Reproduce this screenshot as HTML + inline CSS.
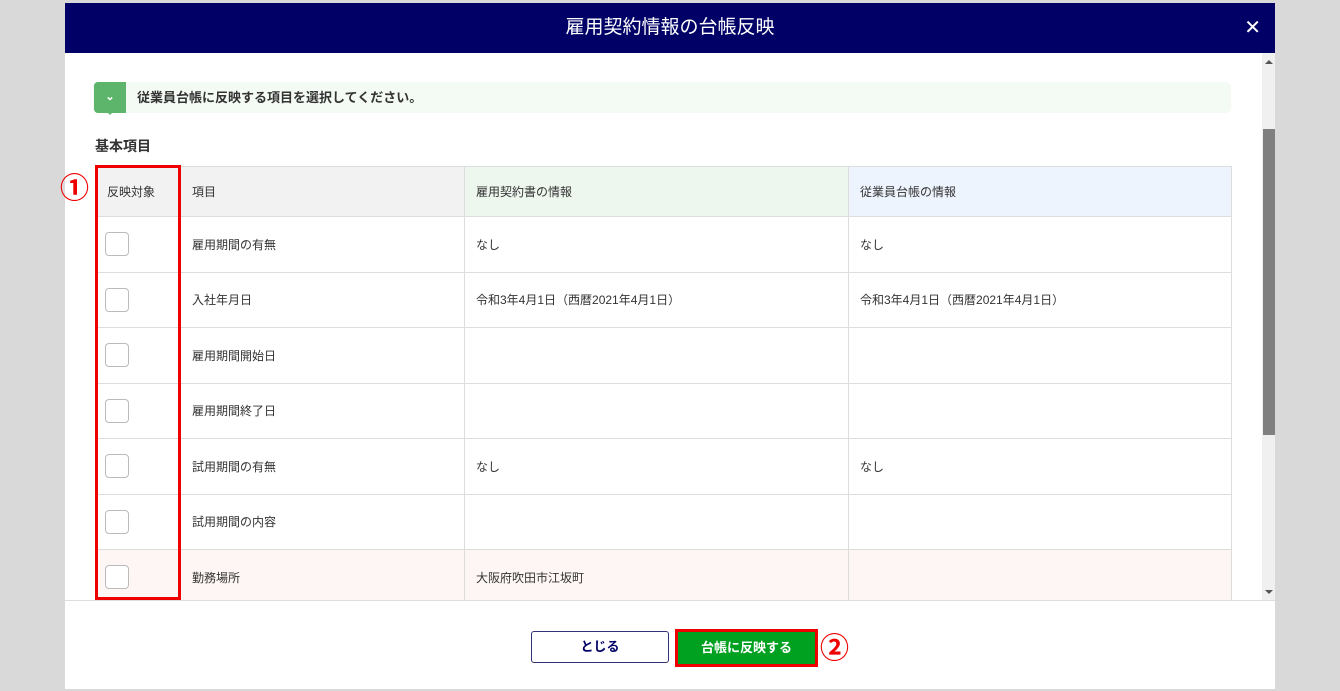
<!DOCTYPE html>
<html><head><meta charset="utf-8"><style>
*{margin:0;padding:0;box-sizing:border-box}
body{width:1340px;height:691px;background:#d9d9d9;font-family:"Liberation Sans","Noto Sans CJK JP",sans-serif;position:relative;overflow:hidden;color:#333}
.modal{position:absolute;left:65px;top:3px;width:1210px;height:686px;background:#fff}
.hd{height:50px;background:#000066;color:#fff;font-size:19px;text-align:center;line-height:50px}
.x{position:absolute;right:14px;top:0;font-size:20px;line-height:50px;color:#fff}
.sb{position:absolute;left:1197px;top:50px;width:13px;height:547px;background:#f0f0f0}
.thumb{position:absolute;left:1px;top:76px;width:12px;height:306px;background:#808080}
.note{position:absolute;left:28px;top:79px;width:1138px;height:31px;background:#f4faf4;border-radius:5px;font-size:13px;font-weight:bold;line-height:31px;padding-left:44px}
.gi{position:absolute;left:1px;top:0;width:32px;height:31px;background:#5cb56a;border-radius:4px 0 0 4px;color:#fff;font-size:11px;text-align:center;line-height:30px}
.gi:after{content:"";position:absolute;left:12px;bottom:-6px;border:4px solid transparent;border-top:4px solid #5cb56a}
h3{position:absolute;left:30px;top:133px;font-size:14px;font-weight:bold}
table{position:absolute;left:30px;top:163px;border-collapse:collapse;font-size:12px}
td{border:1px solid #ddd;height:55.5px;padding-left:11px;vertical-align:middle}
tr.h td{height:50px;background:#f2f2f2}
tr.h td.g{background:#edf7ee}tr.h td.b{background:#eef4fd}
tr.p td{background:#fdf6f4}
.cb{width:24px;height:24px;border:1px solid #bbb;border-radius:4px;background:#fff;margin-left:-2px}
.ft{position:absolute;left:0;top:597px;width:1210px;height:89px;border-top:1px solid #ddd;background:#fff}
.red{position:absolute;border:3px solid #e00;}
.circ{position:absolute;color:#e00;font-size:29px;font-weight:bold;line-height:30px}
.b1{position:absolute;left:466px;top:30px;width:138px;height:32px;border:1px solid #33337a;border-radius:3px;text-align:center;line-height:30px;font-size:13px;font-weight:bold;color:#000066}
.b2{position:absolute;left:610px;top:28px;width:143px;height:38px;border:3px solid #e00;background:#00a020;color:#fff;text-align:center;line-height:32px;font-size:13px;font-weight:bold}
</style></head><body>
<div class="modal">
<div class="hd">雇用契約情報の台帳反映</div><div class="x">✕</div>
<div class="sb"><div style="position:absolute;left:3px;top:7px;border:4px solid transparent;border-bottom:4px solid #555;border-top:0"></div><div class="thumb"></div><div style="position:absolute;left:3px;bottom:6px;border:4px solid transparent;border-top:4px solid #555;border-bottom:0"></div></div>
<div style="position:absolute;left:0;top:50px;width:1197px;height:547px;overflow:hidden">
<div class="note" style="top:29px"><div class="gi">⌄</div>従業員台帳に反映する項目を選択してください。</div>
<h3 style="top:83px">基本項目</h3>
<table style="top:113px">
<tr class="h"><td style="width:85px">反映対象</td><td style="width:284px">項目</td><td class="g" style="width:384px">雇用契約書の情報</td><td class="b" style="width:383px">従業員台帳の情報</td></tr>
<tr><td><div class="cb"></div></td><td>雇用期間の有無</td><td>なし</td><td>なし</td></tr>
<tr><td><div class="cb"></div></td><td>入社年月日</td><td>令和3年4月1日（西暦2021年4月1日）</td><td>令和3年4月1日（西暦2021年4月1日）</td></tr>
<tr><td><div class="cb"></div></td><td>雇用期間開始日</td><td></td><td></td></tr>
<tr><td><div class="cb"></div></td><td>雇用期間終了日</td><td></td><td></td></tr>
<tr><td><div class="cb"></div></td><td>試用期間の有無</td><td>なし</td><td>なし</td></tr>
<tr><td><div class="cb"></div></td><td>試用期間の内容</td><td></td><td></td></tr>
<tr class="p"><td><div class="cb"></div></td><td>勤務場所</td><td>大阪府吹田市江坂町</td><td></td></tr>
</table>
</div>
<div class="ft"><div class="b1">とじる</div><div class="b2">台帳に反映する</div><div class="circ" style="left:755px;top:33px">②</div></div>
</div>
<div class="red" style="left:95px;top:165px;width:86px;height:435px"></div>
<div class="circ" style="left:60px;top:174px">①</div>
</body></html>
